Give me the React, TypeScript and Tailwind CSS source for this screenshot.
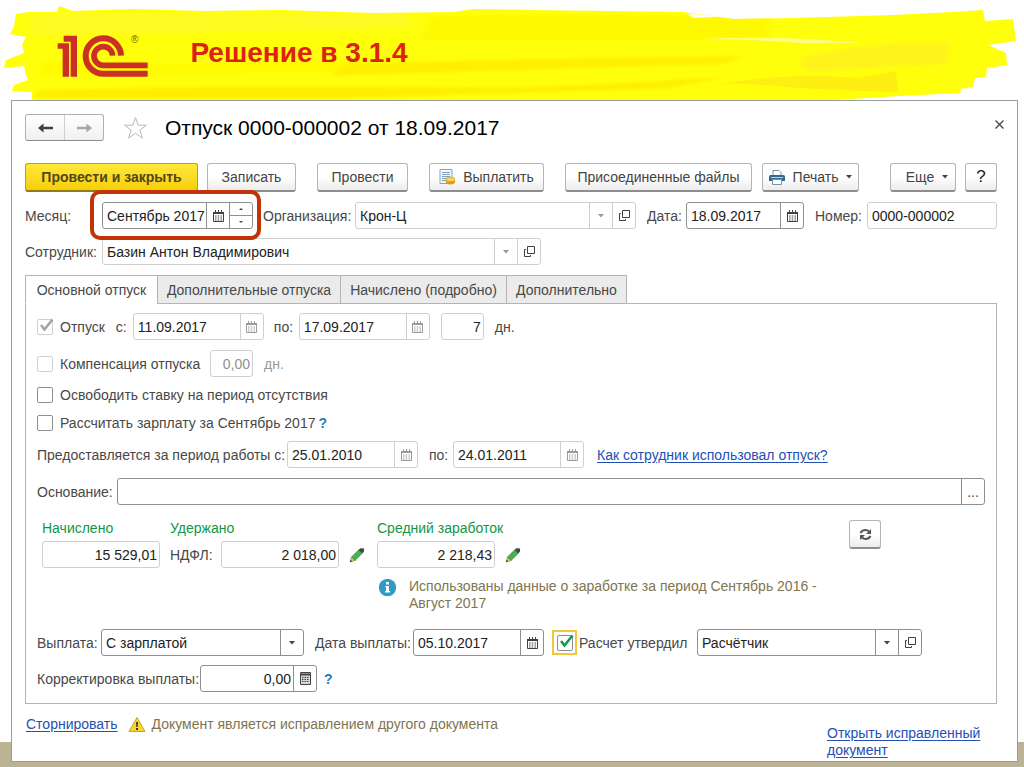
import React, { useState } from 'react';

type Tone = 'light' | 'dark';

const borderTone = {
  light: 'border-[#cfcfcf]',
  dark: 'border-[#8f8f8f]',
};

const CalendarIcon = ({ tone = 'dark' }: { tone?: Tone }) => (
  <svg width="11" height="12" viewBox="0 0 11 12" fill="none" stroke={tone === 'dark' ? '#404040' : '#9a9a9a'} aria-hidden="true">
    <path d="M2.5 0v2M5.5 0v2M8.5 0v2" />
    <path d="M0 2.5h11M0 3.5h11" />
    <path d="M.5 3v8.5h10V3" />
    <path d="M2 6h1.5M4.7 6h1.5M7.5 6H9M2 8h1.5M4.7 8h1.5M7.5 8H9M2 10h1.5M4.7 10h1.5M7.5 10H9" />
  </svg>
);

const OpenIcon = () => (
  <svg width="11" height="11" viewBox="0 0 11 11" fill="none" stroke="#404040" aria-hidden="true">
    <path d="M3.5 .5h7v7h-7z" />
    <path d="M2 3.5H.5v7h6V9" />
  </svg>
);

const Caret = ({ tone = 'dark' }: { tone?: Tone }) => (
  <svg width="6" height="4" viewBox="0 0 6 4" fill={tone === 'dark' ? '#444' : '#999'} aria-hidden="true">
    <path d="M0 0h6L3 3.5z" />
  </svg>
);

const PencilIcon = () => (
  <svg width="16" height="16" viewBox="0 0 16 16" aria-hidden="true">
    <path d="M1 15l1.5-5 3.5 3.5z" fill="#f3c877" stroke="#8a6a35" strokeWidth=".6" />
    <path d="M1 15l.7-2.2 1.6 1.5z" fill="#333" />
    <path d="M2.5 10L9.5 3l3.7 3.4L6 13.5z" fill="#4caf50" stroke="#2d7a3a" strokeWidth=".6" />
    <path d="M9.5 3l1.8-1.7 3.9.2-.3 3.2-1.7 1.7z" fill="#3d4a46" />
  </svg>
);

const Logo = () => (
  <svg className="mt-[35px] h-[43px] w-[92px] shrink-0" viewBox="170 106 276 129" aria-label="1C">
    <g fill="#cb2f25">
      <path d="M190 108h40v123h-19V126h-21z" />
      <path d="M172 131h34v100h-19v-84h-15z" />
    </g>
    <g fill="none" stroke="#cb2f25" strokeWidth="18">
      <path d="M362 168a53 53 0 1 0-53 54h133" />
      <path d="M337 168a28 28 0 1 0-28 29h133" strokeWidth="17" />
    </g>
  </svg>
);

const Brush = () => (
  <svg className="absolute inset-0 h-full w-full" viewBox="0 0 1024 100" preserveAspectRatio="none" aria-hidden="true">
    <defs>
      <clipPath id="stroke">
        <path d="M16 14l13-2h28l2-6 14 5 60-2 70 2 80-1 90 3 80-1 20-3 60 1 150 2 50 7 60-1 100-3 60-3 30-2 2 11 28-2 3 22-28 4 18 8 1 12-20 3-1 9-11 1-2 9-12 2-1 4-60 3-80 5H32v-9l-20-1 2-6 14-5-3-8-1-6-20 2 2-8 18-7-2-8 4-8-16-3 4-8z" />
      </clipPath>
      <filter id="soft" x="-5%" y="-50%" width="110%" height="200%">
        <feGaussianBlur stdDeviation="3 1.5" />
      </filter>
    </defs>
    <g clipPath="url(#stroke)">
      <path d="M0 0h1024v100H0z" fill="#ffff0c" />
      <g filter="url(#soft)">
        <path d="M30 14h380v14l-380 8z" fill="#fffb20" />
        <path d="M430 16q200-4 340 2v22H420z" fill="#fff900" />
        <path d="M40 62l90 3 240-5-30 12-300 4z" fill="#fffa00" />
        <path d="M345 64q170-6 400-8l-20 8-170 5-225 7z" fill="#fff000" />
        <path d="M40 90q250-6 470-2 120-4 220-12l-60 12-330 10H32z" fill="#ffee00" />
        <path d="M800 58q90-20 150-14l-3 20-80 4-60 4z" fill="#fff31a" />
      </g>
      <path d="M700 39q80-4 160 4h-60q-60-4-100-4z" fill="#fffc80" />
      <path d="M720 84q70-12 140-6l36-7 2 21q-80-2-110-5-40-4-68-3z" fill="#ffee12" />
      <path d="M688 14l46 2-40 2z" fill="#fff" />
    </g>
  </svg>
);

type FieldProps = {
  id: string;
  value: string;
  width?: string;
  tone?: Tone;
  right?: boolean;
  muted?: boolean;
  label?: string;
  children?: React.ReactNode;
};

const Field = ({ id, value, width = 'w-[118px]', tone = 'light', right, muted, label, children }: FieldProps) => (
  <div className={`flex h-[27px] rounded-[3px] border bg-white ${borderTone[tone]} ${width}`}>
    <input
      id={id}
      defaultValue={value}
      aria-label={label}
      className={`w-full min-w-0 flex-1 bg-transparent outline-none ${right ? 'pr-[2px] text-right' : 'pl-1'} ${muted ? 'text-[#8f8f8f]' : 'text-[#222]'}`}
    />
    {children}
  </div>
);

const FieldButton = ({ label, tone = 'light', children }: { label: string; tone?: Tone; children: React.ReactNode }) => (
  <button aria-label={label} className={`flex w-[23px] shrink-0 items-center justify-center border-l ${borderTone[tone]}`}>
    {children}
  </button>
);

type DateFieldProps = { id: string; value: string; width?: string; tone?: Tone };

const DateField = ({ id, value, width = 'w-[131px]', tone = 'light' }: DateFieldProps) => (
  <Field id={id} value={value} width={width} tone={tone}>
    <FieldButton label="Выбрать дату" tone={tone}>
      <CalendarIcon tone={tone} />
    </FieldButton>
  </Field>
);

type CommandProps = { className: string; primary?: boolean; label?: string; children: React.ReactNode };

const Command = ({ className, primary, label, children }: CommandProps) => (
  <button
    aria-label={label}
    className={`flex h-[29px] shrink-0 items-center justify-center rounded-[3px] border border-b-2 ${
      primary
        ? 'border-[#c0a000] border-b-[#8f7a1c] bg-linear-to-b from-[#ffe838] to-[#f5d000] font-bold text-[#54461a]'
        : 'border-[#b5b5b5] border-b-[#8e8e8e] bg-linear-to-b from-white from-50% to-[#ececec] text-[#444]'
    } ${className}`}
  >
    {children}
  </button>
);

const CheckBox = ({ id, checked, tone = 'dark' }: { id: string; checked?: boolean; tone?: Tone }) => (
  <span className="relative flex">
    <input
      id={id}
      type="checkbox"
      defaultChecked={checked}
      className={`peer h-4 w-4 appearance-none rounded-[2px] border bg-white ${borderTone[tone]}`}
    />
    <svg
      className="pointer-events-none absolute bottom-[3px] left-[3px] hidden peer-checked:block"
      width="14"
      height="14"
      viewBox="0 0 14 14"
      fill="none"
      stroke={tone === 'dark' ? '#12994a' : '#a3a3a3'}
      strokeWidth="2.6"
      aria-hidden="true"
    >
      <path d="M1 7L4.500 11.500 12.500 1.500" />
    </svg>
  </span>
);

type CheckProps = { id: string; label: string; checked?: boolean; tone?: Tone };

const Check = ({ id, label, checked, tone }: CheckProps) => (
  <div className="flex items-center">
    <CheckBox id={id} checked={checked} tone={tone} />
    <label htmlFor={id} className="pl-[7px]">{label}</label>
  </div>
);

const tabs = [
  { title: 'Основной отпуск', width: 'w-[133px]' },
  { title: 'Дополнительные отпуска', width: 'w-[184px]' },
  { title: 'Начислено (подробно)', width: 'w-[167px]' },
  { title: 'Дополнительно', width: 'w-[121px]' },
];

const MainTab = () => (
  <>
    <div className="flex items-center">
      <Check id="vacation" label="Отпуск" checked tone="light" />
      <label htmlFor="from" className="w-7 pl-[11px]">с:</label>
      <DateField id="from" value="11.09.2017" />
      <label htmlFor="to" className="w-[35px] pl-[10px]">по:</label>
      <DateField id="to" value="17.09.2017" />
      <div className="flex items-center pl-[11px]">
        <Field id="days" value="7" width="w-[43px]" right label="Дней отпуска" />
        <span className="pl-[11px]">дн.</span>
      </div>
    </div>

    <div className="mt-[10px] flex items-center">
      <div className="w-[173px]">
        <Check id="compensation" label="Компенсация отпуска" tone="light" />
      </div>
      <Field id="compensationDays" value="0,00" width="w-[43px]" right muted label="Дней компенсации" />
      <span className="pl-[11px] text-[#999]">дн.</span>
    </div>

    <div className="mt-[10px] h-4">
      <Check id="release" label="Освободить ставку на период отсутствия" />
    </div>
    <div className="mt-3 flex h-4 items-center">
      <Check id="salary" label="Рассчитать зарплату за Сентябрь 2017" />
      <button className="pl-[3px] font-bold text-[#1a82b5]">?</button>
    </div>

    <div className="mt-[10px] flex items-center">
      <label htmlFor="periodFrom" className="w-[250px] whitespace-nowrap">Предоставляется за период работы с:</label>
      <DateField id="periodFrom" value="25.01.2010" />
      <label htmlFor="periodTo" className="w-[35px] pl-[11px]">по:</label>
      <DateField id="periodTo" value="24.01.2011" />
      <a href="#usage" className="pl-[13px] text-[#2450b4] underline underline-offset-2">Как сотрудник использовал отпуск?</a>
    </div>

    <div className="mt-[10px] flex items-center">
      <label htmlFor="reason" className="w-20">Основание:</label>
      <Field id="reason" value="" width="flex-1" tone="dark">
        <FieldButton label="Выбрать основание" tone="dark">...</FieldButton>
      </Field>
    </div>

    <div className="mt-[15px] flex pl-[5px]">
      <div className="w-[128px]">
        <label htmlFor="accrued" className="block leading-[17px] text-[#129648]">Начислено</label>
        <div className="mt-1">
          <Field id="accrued" value="15 529,01" right />
        </div>
      </div>
      <div className="w-[207px]">
        <div className="leading-[17px] text-[#129648]">Удержано</div>
        <div className="mt-1 flex items-center">
          <label htmlFor="tax" className="w-[51px]">НДФЛ:</label>
          <Field id="tax" value="2 018,00" right />
          <button aria-label="Изменить НДФЛ" className="pl-[10px]"><PencilIcon /></button>
        </div>
      </div>
      <div>
        <label htmlFor="average" className="block leading-[17px] text-[#129648]">Средний заработок</label>
        <div className="mt-1 flex items-center">
          <Field id="average" value="2 218,43" right />
          <button aria-label="Изменить средний заработок" className="pl-[10px]"><PencilIcon /></button>
        </div>
      </div>
      <div className="mr-[104px] ml-auto">
        <Command className="w-8" label="Пересчитать">
          <svg width="13" height="13" viewBox="0 0 13 13" fill="none" stroke="#555" strokeWidth="2" aria-hidden="true">
            <path d="M1.5 5Q3 2 6.5 2q2 0 3.500 1.500M11.500 8Q10 11 6.500 11q-2 0-3.500-1.500" />
            <path d="M12 1v5H7zM1 12V7h5z" fill="#555" stroke="none" />
          </svg>
        </Command>
      </div>
    </div>

    <div className="mt-[10px] flex pl-[341px]">
      <svg width="19" height="19" viewBox="0 0 19 19" className="shrink-0" aria-hidden="true">
        <circle cx="9.5" cy="9.5" r="8.7" fill="#2f9bc4" />
        <path d="M8 4h3v2.5H8zM7.5 8H11v5h1v1.5H7V13h1V9.5h-.5z" fill="#fff" />
      </svg>
      <p className="w-[430px] pl-3 leading-[17px] text-[#80754f]">
        Использованы данные о заработке за период Сентябрь 2016 - Август 2017
      </p>
    </div>

    <div className="mt-[17px] flex items-center">
      <label htmlFor="payout" className="w-16">Выплата:</label>
      <div className="relative flex h-[27px] w-[203px] rounded-[3px] border border-[#8f8f8f]">
        <select id="payout" className="w-full appearance-none bg-transparent pl-1 text-[#222] outline-none">
          <option>С зарплатой</option>
        </select>
        <span className="pointer-events-none absolute inset-y-0 right-0 flex w-[23px] items-center justify-center border-l border-[#8f8f8f]">
          <Caret />
        </span>
      </div>
      <label htmlFor="payDate" className="w-[109px] pl-[11px] whitespace-nowrap">Дата выплаты:</label>
      <DateField id="payDate" value="05.10.2017" tone="dark" />
      <div className="ml-2 flex h-[25px] w-[25px] items-center justify-center border-2 border-[#f3c73c]">
        <CheckBox id="approved" checked />
      </div>
      <label htmlFor="approved" className="w-[120px] pl-[2px] whitespace-nowrap">Расчет утвердил</label>
      <Field id="approver" value="Расчётчик" width="w-[225px]" tone="dark" label="Расчет утвердил">
        <FieldButton label="Список" tone="dark"><Caret /></FieldButton>
        <FieldButton label="Открыть" tone="dark"><OpenIcon /></FieldButton>
      </Field>
    </div>

    <div className="mt-[9px] flex items-center">
      <label htmlFor="correction" className="w-[163px] whitespace-nowrap">Корректировка выплаты:</label>
      <Field id="correction" value="0,00" width="w-[117px]" tone="dark" right>
        <FieldButton label="Калькулятор" tone="dark">
          <svg width="11" height="13" viewBox="0 0 11 13" fill="none" stroke="#444" aria-hidden="true">
            <path d="M.5 .5h10v12H.5z" fill="#d5d5d5" />
            <path d="M1 2.5h9" strokeWidth="2" />
            <path d="M2 5.5h7M2 7.5h7M2 9.5h7" strokeDasharray="1.5 1" />
          </svg>
        </FieldButton>
      </Field>
      <button className="pl-[7px] font-bold text-[#1a82b5]">?</button>
    </div>
  </>
);

const App = () => {
  const [activeTab, setActiveTab] = useState(0);

  return (
    <div className="flex min-h-screen flex-col bg-[linear-gradient(to_top,#bcb394_25px,#fefefe_25px)] font-['Liberation_Sans',Arial,sans-serif] text-[14px] leading-4 text-[#484848]">
      {/* Banner */}
      <header className="relative h-[100px] overflow-hidden">
        <Brush />
        <div className="relative flex pl-[57px]">
          <Logo />
          <span className="-ml-[18px] pt-[32px] text-[10px] text-[#7a5a10]">®</span>
          <h1 className="pt-[37px] pl-[52px] text-[28px] leading-8 font-bold text-[#dd2211]">Решение в 3.1.4</h1>
        </div>
      </header>

      {/* Document window */}
      <main className="mr-[6px] mb-[5px] ml-[11px] flex-1 border border-[#9c9c9c] bg-white pr-[20px] pl-[13px]">
        <div className="flex items-center pt-[13px]">
          <div className="flex h-[27px] w-[79px] rounded-[3px] border border-[#b0b0b0] border-b-[#8e8e8e] bg-linear-to-b from-white to-[#f0f0f0]">
            <button aria-label="Назад" className="flex flex-1 items-center justify-center border-r border-[#cfcfcf]">
              <svg width="15" height="10" viewBox="0 0 15 10" fill="#404040" aria-hidden="true">
                <path d="M0 5l5.5-4.500v3.200H15v2.600H5.500v3.200z" />
              </svg>
            </button>
            <button aria-label="Вперед" className="flex flex-1 items-center justify-center">
              <svg width="15" height="10" viewBox="0 0 15 10" fill="#a8a8a8" aria-hidden="true">
                <path d="M15 5L9.5 .5v3.200H0v2.600h9.500v3.200z" />
              </svg>
            </button>
          </div>
          <button aria-label="В избранное" className="ml-[19px]">
            <svg width="25" height="24" viewBox="0 0 25 24" fill="#fff" stroke="#b4b8c0" aria-hidden="true">
              <path d="M12.5 1.5l2.700 7.700h8.300l-6.600 4.900 2.500 8-6.900-4.800-6.900 4.800 2.500-8-6.600-4.900h8.300z" />
            </svg>
          </button>
          <h2 className="pl-[17px] text-[21px] leading-6 text-black">Отпуск 0000-000002 от 18.09.2017</h2>
          <button aria-label="Закрыть" className="-mr-[14px] ml-auto flex h-5 w-6 items-center justify-center self-start">
            <svg width="9" height="9" viewBox="0 0 9 9" stroke="#444" strokeWidth="1.3" aria-hidden="true">
              <path d="M.5 .5l8 8M8.5 .5l-8 8" />
            </svg>
          </button>
        </div>

        {/* Commands */}
        <div className="mt-[22px] flex">
          <Command className="w-[173px]" primary>Провести и закрыть</Command>
          <Command className="ml-[9px] w-[89px]">Записать</Command>
          <Command className="ml-[21px] w-[91px]">Провести</Command>
          <Command className="ml-[21px] w-[115px] gap-2">
            <svg width="16" height="16" viewBox="0 0 16 16" aria-hidden="true">
              <path d="M1 .5h12v14H1z" fill="#f4f8fb" stroke="#8aa3b8" />
              <path d="M3 3.5h8M3 5.5h8M3 7.5h8M3 9.5h5M3 11.5h4" stroke="#7fa0bd" />
              <path d="M7 11v3q4 3 9 0V9z" fill="#dc9c18" />
              <ellipse cx="11.5" cy="10.5" rx="4.5" ry="2.3" fill="#f9d45a" stroke="#cf9212" strokeWidth=".7" />
            </svg>
            Выплатить
          </Command>
          <Command className="ml-[21px] w-[187px]">Присоединенные файлы</Command>
          <Command className="ml-[10px] w-[97px] gap-2">
            <svg width="16" height="15" viewBox="0 0 16 15" aria-hidden="true">
              <path d="M4 5V.5h6l2 2V5" fill="#fff" stroke="#6f93b0" />
              <path d="M1.5 5h13q1.500 0 1.500 1.500V11H0V6.500Q0 5 1.500 5z" fill="#34688f" />
              <path d="M2 7.5h12" stroke="#b9d2e4" />
              <path d="M3.5 9.5h9v5h-9z" fill="#fff" stroke="#6f93b0" />
            </svg>
            Печать
            <Caret />
          </Command>
          <Command className="ml-auto w-[66px] gap-2 pl-2">
            Еще
            <Caret />
          </Command>
          <Command className="ml-[9px] w-8">
            <span className="text-[17px] text-[#222]">?</span>
          </Command>
        </div>

        <div className="mt-[10px] flex items-center">
          <label htmlFor="month" className="w-[77px]">Месяц:</label>
          <div className="relative">
            <Field id="month" value="Сентябрь 2017" width="w-[151px]" tone="dark">
              <FieldButton label="Выбрать месяц" tone="dark"><CalendarIcon /></FieldButton>
              <div className="flex w-[23px] shrink-0 flex-col border-l border-[#8f8f8f]">
                <button aria-label="Следующий месяц" className="flex flex-1 rotate-180 items-center justify-center">
                  <svg width="4" height="2" viewBox="0 0 4 2" fill="#444"><path d="M0 0h4L2 2z" /></svg>
                </button>
                <button aria-label="Предыдущий месяц" className="flex flex-1 items-center justify-center border-t border-[#8f8f8f]">
                  <svg width="4" height="2" viewBox="0 0 4 2" fill="#444"><path d="M0 0h4L2 2z" /></svg>
                </button>
              </div>
            </Field>
            <div className="pointer-events-none absolute -top-3 -right-2 -bottom-[11px] -left-3 rounded-[10px] border-4 border-[#c23407]" />
          </div>
          <label htmlFor="organization" className="w-[102px] pl-[10px]">Организация:</label>
          <Field id="organization" value="Крон-Ц" width="min-w-0 flex-1">
            <FieldButton label="Список"><Caret tone="light" /></FieldButton>
            <FieldButton label="Открыть"><OpenIcon /></FieldButton>
          </Field>
          <label htmlFor="date" className="w-[50px] pl-[11px]">Дата:</label>
          <DateField id="date" value="18.09.2017" width="w-[118px]" tone="dark" />
          <label htmlFor="number" className="w-[63px] pl-[11px]">Номер:</label>
          <Field id="number" value="0000-000002" width="w-[130px]" />
        </div>

        <div className="mt-[9px] flex items-center">
          <label htmlFor="employee" className="w-[77px]">Сотрудник:</label>
          <Field id="employee" value="Базин Антон Владимирович" width="w-[439px]">
            <FieldButton label="Список"><Caret tone="light" /></FieldButton>
            <FieldButton label="Открыть"><OpenIcon /></FieldButton>
          </Field>
        </div>

        {/* Tabs */}
        <div role="tablist" className="relative mt-[10px] -mb-px flex">
          {tabs.map((tab, index) => (
            <button
              key={tab.title}
              role="tab"
              aria-selected={activeTab === index}
              onClick={() => setActiveTab(index)}
              className={`-mr-px h-[29px] border border-[#b4b4b4] whitespace-nowrap ${tab.width} ${
                activeTab === index ? 'border-b-white bg-white' : 'bg-[#ebebeb]'
              }`}
            >
              {tab.title}
            </button>
          ))}
        </div>
        <div role="tabpanel" className="border border-[#b4b4b4] px-[11px] pt-[9px] pb-[11px]">
          {activeTab === 0 && <MainTab />}
        </div>

        {/* Footer links */}
        <div className="flex items-start pt-[12px] leading-[17px]">
          <a href="#reverse" className="pl-px text-[#2450b4] underline underline-offset-2">Сторнировать</a>
          <svg className="ml-[10px] shrink-0" width="18" height="17" viewBox="0 0 18 17" aria-hidden="true">
            <path d="M9 1.5L17 15.5H1z" fill="#f8d62e" stroke="#c9a21a" strokeLinejoin="round" />
            <path d="M8 6h2l-.4 5H8.400zM8 12h2v2H8z" fill="#333" />
          </svg>
          <p className="pl-[6px] text-[#80754f]">Документ является исправлением другого документа</p>
          <a href="#corrected" className="mt-[9px] ml-auto w-[170px] text-[#2450b4] underline underline-offset-2">
            Открыть исправленный документ
          </a>
        </div>
      </main>
    </div>
  );
};

export default App;
